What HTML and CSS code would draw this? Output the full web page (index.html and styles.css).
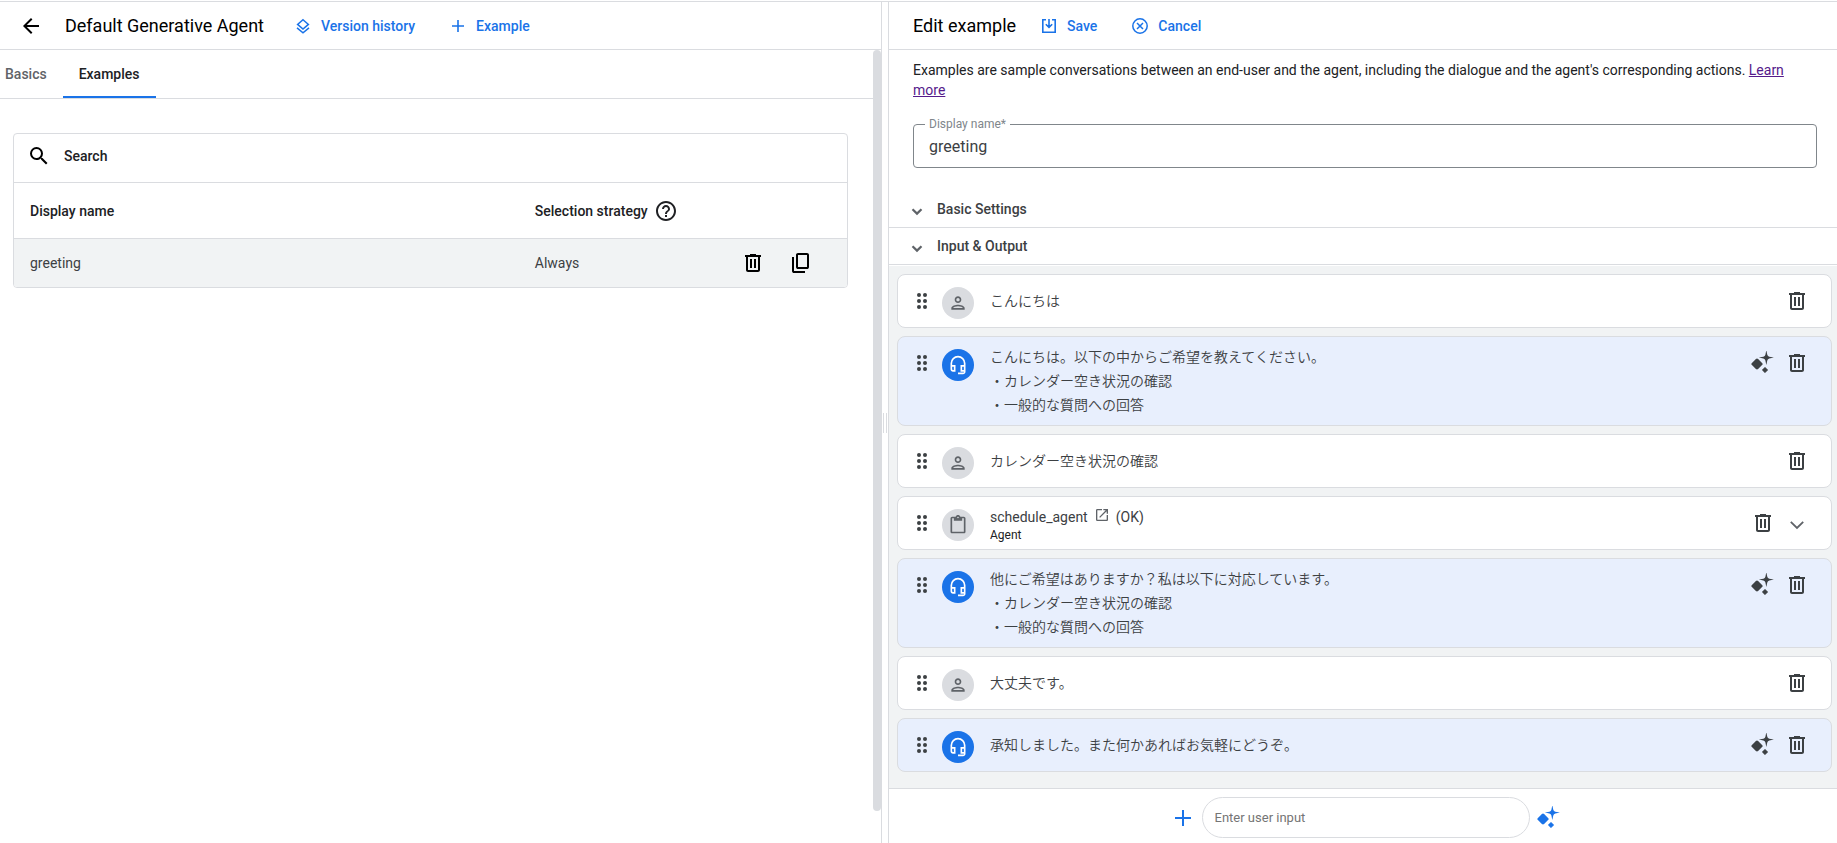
FILE: index.html
```html
<!DOCTYPE html>
<html lang="en">
<head>
<meta charset="utf-8">
<title>Default Generative Agent</title>
<link rel="stylesheet" href="styles.css">
</head>
<body>
<svg class="sprite" aria-hidden="true">
  <symbol id="back" viewBox="0 0 24 24"><path d="M20 11H7.83l5.59-5.59L12 4l-8 8 8 8 1.41-1.41L7.83 13H20z"/></symbol>
  <symbol id="layers" viewBox="0 0 18 18"><path d="M9 2.800l5.400 4.600L9 12 3.600 7.400z M3 10.800l6 5 6-5" fill="none" stroke="currentColor" stroke-width="1.500"/></symbol>
  <symbol id="plus-small" viewBox="0 0 18 18"><path d="M8.200 3h1.600v5.200H15v1.600H9.800V15H8.200V9.800H3V8.200h5.200z"/></symbol>
  <symbol id="save" viewBox="0 0 18 18"><path d="M6 2.800H2.800v12.400h12.400V2.800H12M9 2v8M5.800 7.200L9 10.400l3.200-3.200" fill="none" stroke="currentColor" stroke-width="1.600"/></symbol>
  <symbol id="cancel" viewBox="0 0 18 18"><circle cx="9" cy="9" r="7.200" fill="none" stroke="currentColor" stroke-width="1.500"/><path d="M6 6l6 6M12 6l-6 6" stroke="currentColor" stroke-width="1.500"/></symbol>
  <symbol id="search" viewBox="0 0 24 24"><path d="M15.500 14h-.79l-.28-.27A6.471 6.471 0 0 0 16 9.500 6.500 6.500 0 1 0 9.500 16c1.610 0 3.090-.59 4.230-1.570l.27.28v.79l5 4.990L20.490 19l-4.990-5zm-6 0C7.010 14 5 11.990 5 9.500S7.010 5 9.500 5 14 7.010 14 9.500 11.990 14 9.500 14z"/></symbol>
  <symbol id="help" viewBox="0 0 24 24"><path d="M11 18h2v-2h-2v2zm1-16C6.480 2 2 6.480 2 12s4.480 10 10 10 10-4.480 10-10S17.520 2 12 2zm0 18c-4.410 0-8-3.590-8-8s3.590-8 8-8 8 3.590 8 8-3.590 8-8 8zm0-14c-2.210 0-4 1.790-4 4h2c0-1.100.9-2 2-2s2 .9 2 2c0 2-3 1.750-3 5h2c0-2.250 3-2.500 3-5 0-2.210-1.790-4-4-4z"/></symbol>
  <symbol id="trash" viewBox="0 0 24 24"><path d="M15 4V3H9v1H4v2h1v13c0 1.100.9 2 2 2h10c1.100 0 2-.9 2-2V6h1V4h-5zm2 15H7V6h10v13zM9 8h2v9H9zm4 0h2v9h-2z"/></symbol>
  <symbol id="copy" viewBox="0 0 24 24"><path d="M9 18q-.825 0-1.412-.587Q7 16.825 7 16V4q0-.825.587-1.413Q8.175 2 9 2h9q.825 0 1.413.587Q20 3.175 20 4v12q0 .825-.587 1.413Q18.825 18 18 18Zm0-2h9V4H9v12Zm-4 6q-.825 0-1.412-.587Q3 20.825 3 20V6h2v14h11v2Z"/></symbol>
  <symbol id="drag" viewBox="0 0 24 24"><circle cx="9" cy="6" r="2"/><circle cx="15" cy="6" r="2"/><circle cx="9" cy="12" r="2"/><circle cx="15" cy="12" r="2"/><circle cx="9" cy="18" r="2"/><circle cx="15" cy="18" r="2"/></symbol>
  <symbol id="person" viewBox="0 0 24 24"><path d="M12 6c1.100 0 2 .9 2 2s-.9 2-2 2-2-.9-2-2 .9-2 2-2m0 10c2.700 0 5.800 1.290 6 2H6c.23-.72 3.310-2 6-2m0-12C9.790 4 8 5.790 8 8s1.790 4 4 4 4-1.790 4-4-1.790-4-4-4zm0 10c-2.670 0-8 1.340-8 4v2h16v-2c0-2.660-5.330-4-8-4z"/></symbol>
  <symbol id="headset" viewBox="0 0 24 24"><path d="M19 14v4h-2v-4h2M7 14v4H6c-.55 0-1-.45-1-1v-3h2m5-13a9 9 0 0 0-9 9v7c0 1.660 1.340 3 3 3h3v-8H5v-2a7 7 0 0 1 14 0v2h-4v8h4v1h-7v2h6c1.660 0 3-1.340 3-3V10a9 9 0 0 0-9-9z"/></symbol>
  <symbol id="clipboard" viewBox="0 0 24 24"><path d="M19 2h-4.180C14.400.84 13.300 0 12 0S9.600.84 9.180 2H5c-1.100 0-2 .9-2 2v16c0 1.100.9 2 2 2h14c1.100 0 2-.9 2-2V4c0-1.100-.9-2-2-2zm-7 0c.55 0 1 .45 1 1s-.45 1-1 1-1-.45-1-1 .45-1 1-1zm7 18H5V4h2v3h10V4h2v16z"/></symbol>
  <symbol id="open" viewBox="0 0 24 24"><path d="M19 19H5V5h7V3H5a2 2 0 0 0-2 2v14a2 2 0 0 0 2 2h14c1.100 0 2-.9 2-2v-7h-2v7zM14 3v2h3.590l-9.830 9.830 1.410 1.410L19 6.410V10h2V3h-7z"/></symbol>
  <symbol id="sparkle" viewBox="0 0 24 24"><path d="M6 7.500q.6 0 1.100.5l4.200 4.200q.8.800 0 1.600L7.100 18q-1.100.9-2.200 0L.7 13.800q-.8-.8 0-1.600L4.900 8q.5-.5 1.100-.5z"/><path d="M15.300-.8l1 4.600q.4 1.700 2 2l4.600.8-4.600.9q-1.600.3-2 2l-1 4.500-.9-4.500q-.4-1.700-2-2l-4.600-.9 4.600-.8q1.600-.3 2-2z"/><path d="M14 16.200l2.800 2.800L14 21.800 11.200 19z" stroke="currentColor" stroke-width=".5" stroke-linejoin="round"/></symbol>
  <symbol id="plus" viewBox="0 0 24 24"><path d="M11 4h2v7h7v2h-7v7h-2v-7H4v-2h7z"/></symbol>
  <symbol id="chevron" viewBox="0 0 24 24"><path d="M5.800 10.800l6.200 6.200 6.200-6.200" fill="none" stroke="currentColor" stroke-width="1.800"/></symbol>
  <symbol id="chevron-bold" viewBox="0 0 18 18"><path d="M4.500 9.200L9 13.600l4.500-4.400" fill="none" stroke="currentColor" stroke-width="2.200"/></symbol>
</svg>

<div class="app">
  <section class="pane pane-left">
    <header class="bar">
      <button class="icon-button back" aria-label="Back"><svg class="icon"><use href="#back"/></svg></button>
      <h1 class="title title-page">Default Generative Agent</h1>
      <button class="action"><svg class="icon-small"><use href="#layers"/></svg>Version history</button>
      <button class="action"><svg class="icon-small"><use href="#plus-small"/></svg>Example</button>
    </header>
    <div class="scroll-row">
      <div class="scroll-content">
        <nav class="tabs">
          <button class="tab">Basics</button>
          <button class="tab tab-active">Examples</button>
        </nav>
        <div class="table-card">
          <label class="search">
            <svg class="icon"><use href="#search"/></svg>
            <input class="search-input" type="search" placeholder="Search" aria-label="Search">
          </label>
          <table class="table">
            <thead>
              <tr>
                <th class="name-column" scope="col">Display name</th>
                <th scope="col"><span class="heading">Selection strategy <svg class="icon"><use href="#help"/></svg></span></th>
                <td class="blank"></td>
              </tr>
            </thead>
            <tbody>
              <tr>
                <td>greeting</td>
                <td>Always</td>
                <td>
                  <div class="row-actions">
                    <button class="icon-button" aria-label="Delete"><svg class="icon"><use href="#trash"/></svg></button>
                    <button class="icon-button" aria-label="Duplicate"><svg class="icon"><use href="#copy"/></svg></button>
                  </div>
                </td>
              </tr>
            </tbody>
          </table>
        </div>
      </div>
      <div class="thumb"></div>
    </div>
  </section>

  <div class="gutter"><div class="grip"></div></div>

  <section class="pane pane-right">
    <header class="bar bar-edit">
      <h2 class="title">Edit example</h2>
      <button class="action"><svg class="icon-small"><use href="#save"/></svg>Save</button>
      <button class="action"><svg class="icon-small"><use href="#cancel"/></svg>Cancel</button>
    </header>
    <p class="intro">Examples are sample conversations between an end-user and the agent, including the dialogue and the agent's corresponding actions. <a href="#learn">Learn<br>more</a></p>
    <div class="field">
      <label class="field-label" for="display-name">Display name*</label>
      <input class="field-input" id="display-name" type="text" value="greeting">
    </div>
    <button class="section"><svg class="icon-small"><use href="#chevron-bold"/></svg>Basic Settings</button>
    <button class="section"><svg class="icon-small"><use href="#chevron-bold"/></svg>Input &amp; Output</button>

    <div class="messages">
      <article class="message">
        <button class="icon-button" aria-label="Move"><svg class="icon"><use href="#drag"/></svg></button>
        <span class="avatar"><svg class="icon-avatar"><use href="#person"/></svg></span>
        <div class="text" lang="ja">こんにちは</div>
        <div class="tools"><button class="icon-button" aria-label="Delete"><svg class="icon"><use href="#trash"/></svg></button></div>
      </article>
      <article class="message message-agent">
        <button class="icon-button" aria-label="Move"><svg class="icon"><use href="#drag"/></svg></button>
        <span class="avatar avatar-agent"><svg class="icon-avatar"><use href="#headset"/></svg></span>
        <div class="text" lang="ja">こんにちは。以下の中からご希望を教えてください。<br>・カレンダー空き状況の確認<br>・一般的な質問への回答</div>
        <div class="tools"><button class="icon-button" aria-label="Generate"><svg class="icon"><use href="#sparkle"/></svg></button><button class="icon-button" aria-label="Delete"><svg class="icon"><use href="#trash"/></svg></button></div>
      </article>
      <article class="message">
        <button class="icon-button" aria-label="Move"><svg class="icon"><use href="#drag"/></svg></button>
        <span class="avatar"><svg class="icon-avatar"><use href="#person"/></svg></span>
        <div class="text" lang="ja">カレンダー空き状況の確認</div>
        <div class="tools"><button class="icon-button" aria-label="Delete"><svg class="icon"><use href="#trash"/></svg></button></div>
      </article>
      <article class="message">
        <button class="icon-button" aria-label="Move"><svg class="icon"><use href="#drag"/></svg></button>
        <span class="avatar"><svg class="icon-avatar"><use href="#clipboard"/></svg></span>
        <div class="text call">
          <div class="call-name">schedule_agent <svg class="icon-open"><use href="#open"/></svg> (OK)</div>
          <div class="call-kind">Agent</div>
        </div>
        <div class="tools"><button class="icon-button" aria-label="Delete"><svg class="icon"><use href="#trash"/></svg></button><button class="icon-button expand" aria-label="Expand"><svg class="icon"><use href="#chevron"/></svg></button></div>
      </article>
      <article class="message message-agent">
        <button class="icon-button" aria-label="Move"><svg class="icon"><use href="#drag"/></svg></button>
        <span class="avatar avatar-agent"><svg class="icon-avatar"><use href="#headset"/></svg></span>
        <div class="text" lang="ja">他にご希望はありますか？私は以下に対応しています。<br>・カレンダー空き状況の確認<br>・一般的な質問への回答</div>
        <div class="tools"><button class="icon-button" aria-label="Generate"><svg class="icon"><use href="#sparkle"/></svg></button><button class="icon-button" aria-label="Delete"><svg class="icon"><use href="#trash"/></svg></button></div>
      </article>
      <article class="message">
        <button class="icon-button" aria-label="Move"><svg class="icon"><use href="#drag"/></svg></button>
        <span class="avatar"><svg class="icon-avatar"><use href="#person"/></svg></span>
        <div class="text" lang="ja">大丈夫です。</div>
        <div class="tools"><button class="icon-button" aria-label="Delete"><svg class="icon"><use href="#trash"/></svg></button></div>
      </article>
      <article class="message message-agent">
        <button class="icon-button" aria-label="Move"><svg class="icon"><use href="#drag"/></svg></button>
        <span class="avatar avatar-agent"><svg class="icon-avatar"><use href="#headset"/></svg></span>
        <div class="text" lang="ja">承知しました。また何かあればお気軽にどうぞ。</div>
        <div class="tools"><button class="icon-button" aria-label="Generate"><svg class="icon"><use href="#sparkle"/></svg></button><button class="icon-button" aria-label="Delete"><svg class="icon"><use href="#trash"/></svg></button></div>
      </article>
    </div>

    <footer class="composer">
      <button class="icon-button" aria-label="Add"><svg class="icon"><use href="#plus"/></svg></button>
      <input class="composer-input" type="text" placeholder="Enter user input" aria-label="Enter user input">
      <button class="icon-button" aria-label="Generate"><svg class="icon"><use href="#sparkle"/></svg></button>
    </footer>
  </section>
</div>
</body>
</html>
```
FILE: styles.css
```css
* { box-sizing: border-box; }

body {
  margin: 0;
  background: #fff;
  color: #202124;
  font: 14px/20px Roboto, "Noto Sans CJK JP", sans-serif;
}

button {
  margin: 0;
  padding: 0;
  border: 0;
  background: none;
  color: inherit;
  font: inherit;
  cursor: pointer;
}

svg { display: block; flex: none; fill: currentColor; overflow: visible; }

.sprite { position: absolute; width: 0; height: 0; }
.icon { width: 24px; height: 24px; }
.icon-small { width: 18px; height: 18px; }
.icon-avatar { width: 20px; height: 20px; }
.icon-button { flex: none; }

.app {
  display: flex;
  min-height: 100vh;
  padding-top: 1px;
}

.pane {
  display: flex;
  flex-direction: column;
  min-width: 0;
  border-top: 1px solid #dadce0;
}

.pane-left { flex: 882 1 0; border-right: 1px solid #dadce0; }
.pane-right { flex: 949 1 0; border-left: 1px solid #dadce0; }

.gutter {
  display: flex;
  align-items: center;
  justify-content: center;
  width: 6px;
  border-top: 1px solid #dadce0;
}

.grip {
  width: 4px;
  height: 20px;
  border: solid #dadce0;
  border-width: 0 1px;
}

.bar {
  display: flex;
  align-items: center;
  height: 48px;
  padding-left: 19px;
  border-bottom: 1px solid #dadce0;
}

.bar-edit { padding-left: 24px; }
.back { margin-right: 22px; color: #000; }

.title {
  margin: 0 24px 0 0;
  color: #000;
  font-size: 18px;
  font-weight: 400;
  line-height: 24px;
}

.title-page { margin-right: 30px; }

.action {
  display: flex;
  align-items: center;
  gap: 9px;
  margin-right: 34px;
  color: #1a73e8;
  font-weight: 500;
}

.scroll-row { display: flex; flex: 1; align-items: flex-start; }
.scroll-content { flex: 1; min-width: 0; }

.thumb {
  width: 8px;
  height: 96%;
  border-radius: 4px;
  background: #dadce0;
}

.tabs {
  display: flex;
  height: 49px;
  border-bottom: 1px solid #dadce0;
}

.tab {
  padding: 2px 16px 0;
  border: solid transparent;
  border-width: 0 0 2px;
  color: #5f6368;
  font-weight: 500;
}

.tab:first-child { padding-left: 5px; }
.tab-active { border-bottom-color: #1a73e8; color: #202124; }

.table-card {
  margin: 34px 25px 0 13px;
  border: 1px solid #dadce0;
  border-radius: 4px;
  overflow: hidden;
}

.search {
  display: flex;
  align-items: center;
  gap: 13px;
  height: 49px;
  padding: 0 13px 4px;
  border-bottom: 1px solid #dadce0;
  color: #000;
}

.search-input {
  flex: 1;
  padding: 0;
  border: 0;
  outline: 0;
  font: 500 14px/20px Roboto, sans-serif;
}

.search-input::placeholder { color: #202124; }

.table { width: 100%; border-collapse: separate; border-spacing: 0; table-layout: fixed; }
.table th, .table .blank { height: 56px; padding: 0 0 0 16px; border-bottom: 1px solid #dadce0; background: #fff; font-weight: 500; text-align: left; }
.table td { height: 48px; padding: 0 0 0 16px; background: #f1f3f4; color: #3c4043; }
.table .name-column { width: 60.6%; }
.heading { display: flex; align-items: center; gap: 6px; white-space: nowrap; }
.row-actions { display: flex; justify-content: flex-end; gap: 24px; padding-right: 34px; color: #000; }

.intro { margin: 10px 24px 24px; }
.intro a { color: #551a8b; }

.field { position: relative; margin: 0 20px 23px 24px; }

.field-label {
  position: absolute;
  top: -8px;
  left: 12px;
  padding: 0 4px;
  background: #fff;
  color: #80868b;
  font-size: 12px;
  line-height: 16px;
}

.field-input {
  display: block;
  width: 100%;
  height: 44px;
  padding: 0 15px;
  border: 1px solid #80868b;
  border-radius: 4px;
  color: #3c4043;
  font: 16px/24px Roboto, sans-serif;
}

.section {
  display: flex;
  align-items: center;
  gap: 11px;
  height: 37px;
  padding-left: 19px;
  border-bottom: 1px solid #dadce0;
  color: #3c4043;
  font-weight: 500;
}

.section .icon-small { color: #5f6368; }

.messages {
  display: flex;
  flex: 1;
  flex-direction: column;
  gap: 8px;
  margin-top: 1px;
  padding: 8px 5px 16px 8px;
  background: #f1f3f4;
}

.message {
  display: flex;
  align-items: flex-start;
  min-height: 54px;
  padding: 0 22px 0 12px;
  border: 1px solid #dadce0;
  border-radius: 8px;
  background: #fff;
  color: #3c4043;
}

.message > .icon-button, .tools { margin-top: 14px; }
.message-agent { background: #e8effd; }

.avatar {
  display: grid;
  place-items: center;
  flex: none;
  width: 32px;
  height: 32px;
  margin: 12px 16px 0 8px;
  border-radius: 50%;
  background: #dadce0;
  color: #5f6368;
}

.avatar-agent { background: #1a73e8; color: #fff; }

.text { flex: 1; align-self: center; padding: 7px 0 9px; line-height: 24px; }
.text[lang] { font-family: "Noto Sans CJK JP", sans-serif; font-weight: 350; }
.text.call { padding: 3px 0 0; }
.call-name { display: flex; gap: 6px; line-height: 20px; }
.icon-open { width: 16px; height: 16px; color: #5f6368; }
.call-kind { font-size: 12px; line-height: 16px; color: #202124; }

.tools { display: flex; gap: 10px; }
.expand { color: #5f6368; }

.composer {
  display: flex;
  align-items: center;
  justify-content: center;
  gap: 7px;
  padding: 8px 0 5px 5px;
  border-top: 1px solid #dadce0;
  color: #1a73e8;
}

.composer-input {
  width: 328px;
  height: 41px;
  padding: 0 12px;
  border: 1px solid #dadce0;
  border-radius: 21px;
  color: #3c4043;
  font: 13px/20px Roboto, sans-serif;
}

.composer-input::placeholder { color: #757575; }
```
